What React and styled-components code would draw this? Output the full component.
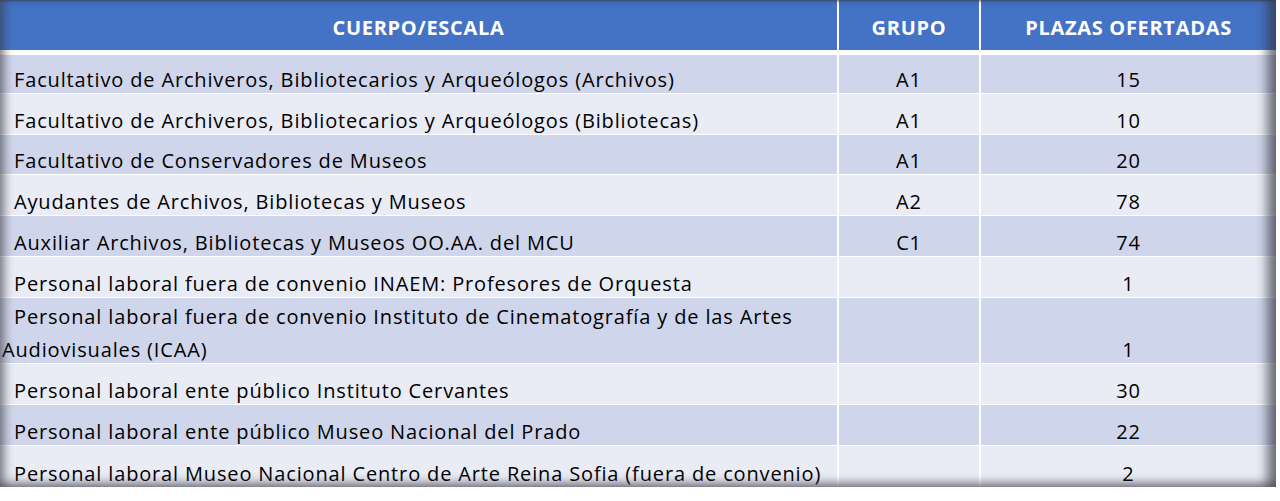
import styled, { createGlobalStyle } from "styled-components";

const Global = createGlobalStyle`
  body {
    margin: 0;
    background: #fff;
    font-family: "Open Sans", Lato, sans-serif;
  }
`;

const Frame = styled.div`
  position: relative;
  width: 1276px;
  background: #fff;
  &::after {
    content: "";
    position: absolute;
    inset: 0;
    pointer-events: none;
    box-shadow: inset 9px 0 8px -4px rgba(60, 60, 70, 0.55),
      inset -13px 0 11px -4px rgba(50, 50, 60, 0.65),
      inset 0 -9px 8px -4px rgba(60, 60, 70, 0.5),
      inset 0 2px 2px -1px rgba(60, 60, 70, 0.6);
  }
`;

const Grid = styled.div`
  display: grid;
  grid-template-columns: 837px 140px 1fr;
  column-gap: 2px;
  row-gap: 1px;
`;

const HeadCell = styled.div`
  background: #4472c4;
  color: #fff;
  font-weight: 700;
  font-size: 20px;
  letter-spacing: 0.7px;
  height: 50px;
  padding-top: 4px;
  box-sizing: border-box;
  display: flex;
  align-items: center;
  justify-content: center;
  margin-bottom: 4px;
`;

const Cell = styled.div`
  background: ${(p) => (p.$odd ? "#cfd5ea" : "#e9ebf5")};
  color: #000;
  font-size: 20px;
  letter-spacing: 0.85px;
  line-height: 33px;
  min-height: ${(p) => p.$h}px;
  padding: 0 2px;
  box-sizing: border-box;
  display: flex;
  align-items: flex-end;
  justify-content: ${(p) => (p.$center ? "center" : "flex-start")};
`;

const Text = styled.span`
  display: block;
  margin-bottom: -3px;
  text-indent: ${(p) => (p.$indent ? "12px" : "0")};
`;

const rows = [
  ["Facultativo de Archiveros, Bibliotecarios y Arqueólogos (Archivos)", "A1", "15", 38],
  ["Facultativo de Archiveros, Bibliotecarios y Arqueólogos (Bibliotecas)", "A1", "10", 40],
  ["Facultativo de Conservadores de Museos", "A1", "20", 39],
  ["Ayudantes de Archivos, Bibliotecas y Museos", "A2", "78", 40],
  ["Auxiliar Archivos, Bibliotecas y Museos OO.AA. del MCU", "C1", "74", 40],
  ["Personal laboral fuera de convenio INAEM: Profesores de Orquesta", "", "1", 40],
  ["Personal laboral fuera de convenio Instituto de Cinematografía y de las Artes Audiovisuales (ICAA)", "", "1", 65],
  ["Personal laboral ente público Instituto Cervantes", "", "30", 40],
  ["Personal laboral ente público Museo Nacional del Prado", "", "22", 40],
  ["Personal laboral Museo Nacional Centro de Arte Reina Sofia (fuera de convenio)", "", "2", 41],
];

export default function App() {
  return (
    <>
      <Global />
      <Frame>
        <Grid>
          <HeadCell>CUERPO/ESCALA</HeadCell>
          <HeadCell>GRUPO</HeadCell>
          <HeadCell>PLAZAS OFERTADAS</HeadCell>
          {rows.map(([name, group, seats, h], i) => {
            const odd = i % 2 === 0;
            return [
              <Cell key={i + "a"} $odd={odd} $h={h}>
                <Text $indent>{name}</Text>
              </Cell>,
              <Cell key={i + "b"} $odd={odd} $h={h} $center>
                <Text>{group}</Text>
              </Cell>,
              <Cell key={i + "c"} $odd={odd} $h={h} $center>
                <Text>{seats}</Text>
              </Cell>,
            ];
          })}
        </Grid>
      </Frame>
    </>
  );
}
